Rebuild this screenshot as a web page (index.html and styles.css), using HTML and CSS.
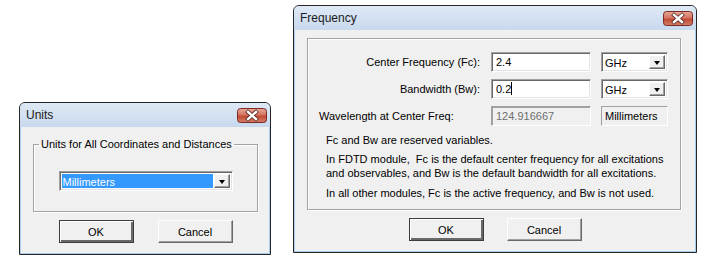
FILE: index.html
```html
<!DOCTYPE html>
<html lang="en">
<head>
    <meta charset="UTF-8">
    <title>Units and Frequency</title>
    <link rel="stylesheet" href="styles.css">
</head>
<body>
<div class="desktop">

    <!-- Units dialog -->
    <div class="window units">
        <div class="titlebar">
            <span class="title">Units</span>
            <svg class="close" width="30" height="15" viewBox="0 0 30 15">
                <defs>
                    <linearGradient id="red1" x1="0" y1="0" x2="0" y2="1">
                        <stop offset="0" stop-color="#e9a99a"/>
                        <stop offset="0.45" stop-color="#d47563"/>
                        <stop offset="0.55" stop-color="#c24a33"/>
                        <stop offset="1" stop-color="#d4806a"/>
                    </linearGradient>
                </defs>
                <rect x="0.5" y="0.5" width="29" height="14" rx="3" fill="url(#red1)" stroke="#7b2b22"/>
                <path d="M11 4 L19 11 M19 4 L11 11" stroke="#5a2a24" stroke-width="4" stroke-linecap="square"/>
                <path d="M11 4 L19 11 M19 4 L11 11" stroke="#ffffff" stroke-width="2.4" stroke-linecap="square"/>
            </svg>
        </div>
        <div class="client">
            <fieldset class="group">
                <legend>Units for All Coordinates and Distances</legend>
                <div class="combo wide">
                    <span class="combo-value selected">Millimeters</span>
                    <span class="drop"><span class="arrow"></span></span>
                </div>
            </fieldset>
            <div class="buttons">
                <button class="btn default">OK</button>
                <button class="btn">Cancel</button>
            </div>
        </div>
    </div>

    <!-- Frequency dialog -->
    <div class="window freq">
        <div class="titlebar">
            <span class="title">Frequency</span>
            <svg class="close" width="30" height="15" viewBox="0 0 30 15">
                <defs>
                    <linearGradient id="red2" x1="0" y1="0" x2="0" y2="1">
                        <stop offset="0" stop-color="#e9a99a"/>
                        <stop offset="0.45" stop-color="#d47563"/>
                        <stop offset="0.55" stop-color="#c24a33"/>
                        <stop offset="1" stop-color="#d4806a"/>
                    </linearGradient>
                </defs>
                <rect x="0.5" y="0.5" width="29" height="14" rx="3" fill="url(#red2)" stroke="#7b2b22"/>
                <path d="M11 4 L19 11 M19 4 L11 11" stroke="#5a2a24" stroke-width="4" stroke-linecap="square"/>
                <path d="M11 4 L19 11 M19 4 L11 11" stroke="#ffffff" stroke-width="2.4" stroke-linecap="square"/>
            </svg>
        </div>
        <div class="client">
            <div class="group fgroup">
                <div class="row">
                    <span class="label right">Center Frequency (Fc):</span>
                    <span class="field">2.4</span>
                    <div class="combo small">
                        <span class="combo-value">GHz</span>
                        <span class="drop"><span class="arrow"></span></span>
                    </div>
                </div>
                <div class="row">
                    <span class="label right">Bandwidth (Bw):</span>
                    <span class="field">0.2<span class="caret"></span></span>
                    <div class="combo small">
                        <span class="combo-value">GHz</span>
                        <span class="drop"><span class="arrow"></span></span>
                    </div>
                </div>
                <div class="row row-last">
                    <span class="label">Wavelength at Center Freq:</span>
                    <span class="field readonly">124.916667</span>
                    <span class="static">Millimeters</span>
                </div>
                <div class="notes">
                    <p>Fc and Bw are reserved variables.</p>
                    <p>In FDTD module,&nbsp; Fc is the default center frequency for all excitations<br>and observables, and Bw is the default bandwidth for all excitations.</p>
                    <p>In all other modules, Fc is the active frequency, and Bw is not used.</p>
                </div>
            </div>
            <div class="buttons freq-buttons">
                <button class="btn default">OK</button>
                <button class="btn">Cancel</button>
            </div>
        </div>
    </div>

</div>
</body>
</html>
```

FILE: styles.css
```css
/* Plain white desktop, dialogs sit on it */
body {
  margin: 0;
  background: #ffffff;
  font-family: "Liberation Sans", Arial, sans-serif;
  font-size: 11px;
  color: #000;
  white-space: nowrap;
}

.desktop {
  display: flex;
  align-items: flex-start;
  padding-left: 19px;
}

/* Window frame */
.window {
  border: 1px solid #262626;
  border-radius: 6px 6px 0 0;
  background: #a9cbee;
}

.units {
  width: 250px;
  margin-top: 102px;
}

.freq {
  width: 402px;
  margin-top: 5px;
  margin-left: 22px;
}

.titlebar {
  height: 24px;
  display: flex;
  align-items: center;
  justify-content: space-between;
  padding: 0 3px 0 6px;
  border-radius: 5px 5px 0 0;
  background: linear-gradient(#dfe9f5, #c8d9ee);
}

.title {
  font-size: 12px;
  color: #1a1a1a;
}

.close {
  display: block;
}

.client {
  margin: 0 1px 1px;
  background: #f0f0f0;
}

.units .client {
  padding: 10px 11px 10px 12px;
}

.freq .client {
  padding: 8px 14px 10px 12px;
}

/* Group boxes */
.group {
  margin: 0;
  border: 1px solid #a3a3a3;
  box-shadow: 1px 1px 0 #ffffff, inset 1px 1px 0 #ffffff;
}

fieldset.group {
  min-width: 0;
  padding: 20px 0 20px;
}

legend {
  padding: 0 2px;
  margin-left: 5px;
  line-height: 14px;
}

/* Combo boxes */
.combo {
  display: flex;
  align-items: stretch;
  height: 20px;
  box-sizing: border-box;
  background: #fff;
  border: 1px solid #a0a0a0;
  border-right-color: #fff;
  border-bottom-color: #fff;
  box-shadow: inset 1px 1px 0 #696969, inset -1px -1px 0 #e3e3e3;
  padding: 2px;
}

.wide {
  width: 174px;
  margin: 0 auto;
}

.small {
  width: 67px;
}

.combo-value {
  flex: 1;
  line-height: 16px;
  padding-left: 1px;
}

.selected {
  background: #3399ff;
  color: #fff;
}

.drop {
  width: 16px;
  margin-left: 1px;
  box-sizing: border-box;
  background: #f0f0f0;
  border: 1px solid #fff;
  border-right-color: #696969;
  border-bottom-color: #696969;
  box-shadow: inset -1px -1px 0 #a0a0a0;
  display: flex;
  align-items: center;
  justify-content: center;
}

.arrow {
  width: 0;
  height: 0;
  border-left: 3.5px solid transparent;
  border-right: 3.5px solid transparent;
  border-top: 4px solid #000;
  margin-top: 1px;
}

/* Frequency group contents */
.fgroup {
  padding: 13px 11px 9px 11px;
}

.row {
  display: flex;
  align-items: center;
  height: 20px;
  margin-bottom: 7px;
}

.row-last {
  margin-top: 2px;
  margin-bottom: 0;
}

.label {
  width: 161px;
  margin-right: 11px;
}

.right {
  text-align: right;
}

.field {
  width: 100px;
  height: 20px;
  margin-right: 10px;
  box-sizing: border-box;
  background: #fff;
  border: 1px solid #a0a0a0;
  border-right-color: #fff;
  border-bottom-color: #fff;
  box-shadow: inset 1px 1px 0 #696969, inset -1px -1px 0 #e3e3e3;
  padding: 2px 4px;
  line-height: 14px;
}

.caret {
  display: inline-block;
  width: 1px;
  height: 13px;
  background: #000;
  vertical-align: -2px;
}

.readonly {
  background: #f0f0f0;
  color: #6d6d6d;
  box-shadow: inset 1px 1px 0 #a0a0a0;
  border-color: #fff;
  border-top-color: #a0a0a0;
  border-left-color: #a0a0a0;
}

.static {
  width: 67px;
  height: 20px;
  box-sizing: border-box;
  border: 1px solid #a0a0a0;
  border-right-color: #fff;
  border-bottom-color: #fff;
  padding: 2px 3px;
  line-height: 14px;
}

.notes {
  margin-top: 7px;
  padding-left: 7px;
}

.notes p {
  margin: 0 0 5px;
  line-height: 14px;
}

.notes p + p + p {
  margin-top: 6px;
  margin-bottom: 0;
}

/* Push buttons */
.buttons {
  display: flex;
  justify-content: center;
  gap: 24px;
  margin-top: 8px;
}

.freq-buttons {
  gap: 23px;
  margin-left: 2px;
}

.btn {
  width: 75px;
  height: 23px;
  box-sizing: border-box;
  padding: 0;
  font-family: inherit;
  font-size: 11px;
  color: #000;
  background: #f0f0f0;
  border: 1px solid #fff;
  border-right-color: #696969;
  border-bottom-color: #696969;
  box-shadow: inset -1px -1px 0 #a0a0a0;
}

.default {
  border: 1px solid #3c3c3c;
  box-shadow: inset 1px 1px 0 #fff, inset -2px -2px 0 #696969;
}
```
